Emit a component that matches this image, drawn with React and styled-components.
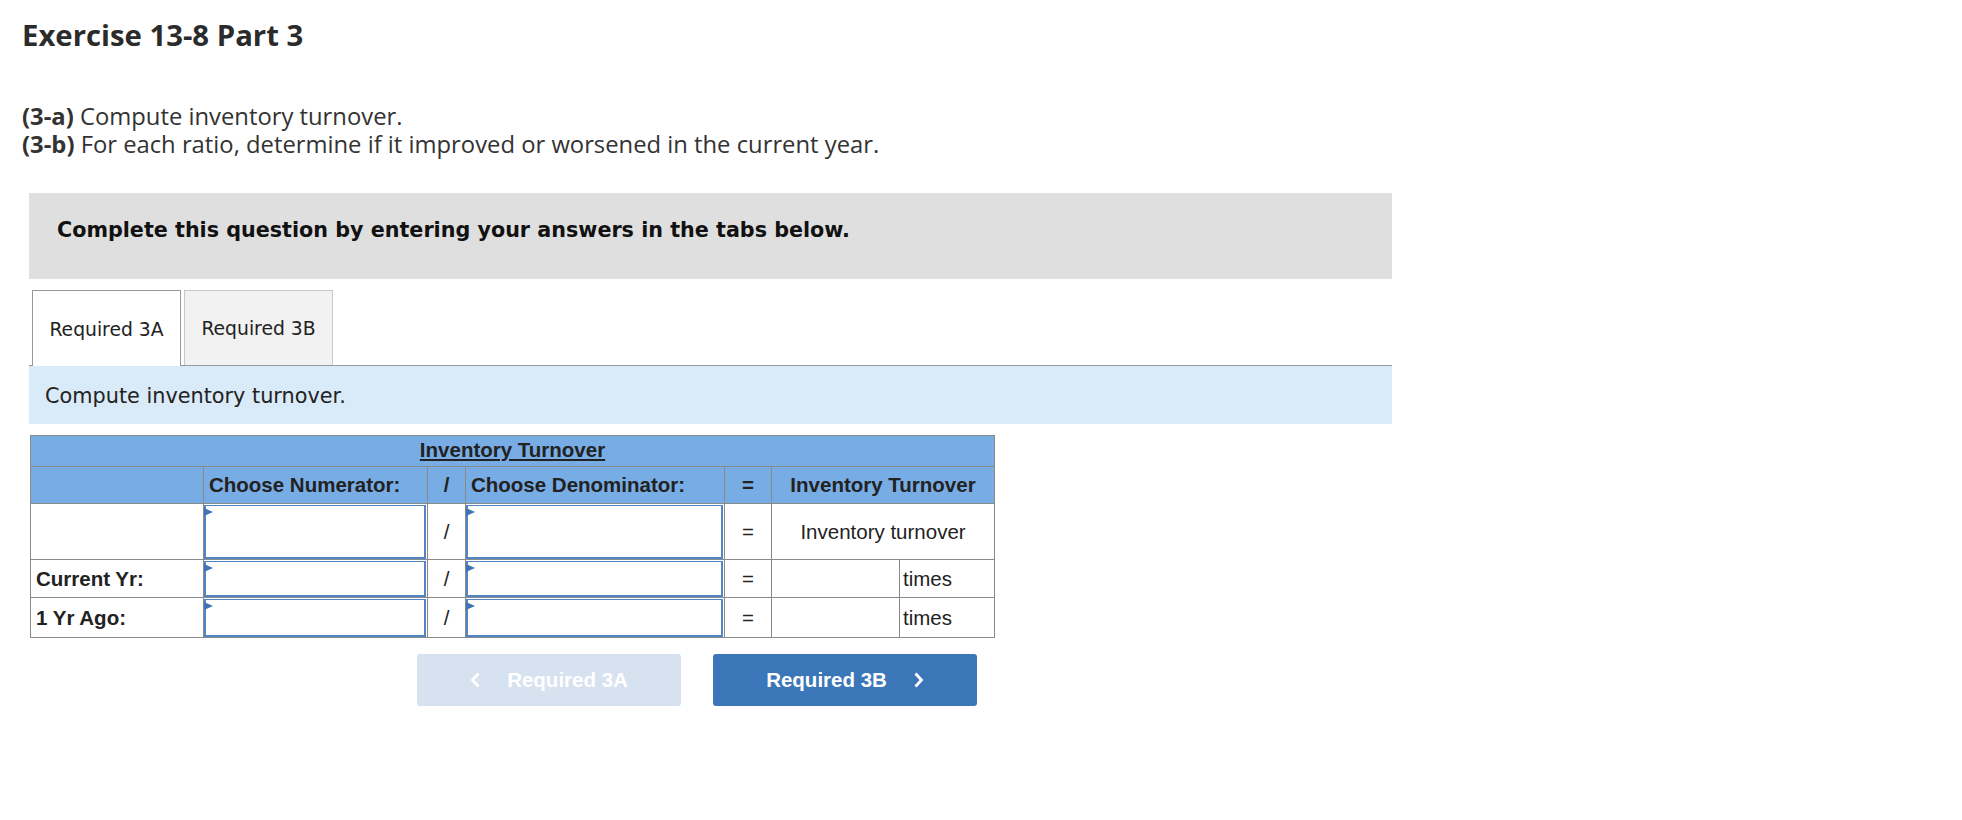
import React from 'react';
import styled, { createGlobalStyle } from 'styled-components';

const GlobalStyle = createGlobalStyle`
	body {
		margin: 0;
		background: #fff;
	}
`;

const Page = styled.div`
	padding: 17px 0 40px 22px;
`;

const Title = styled.h1`
	margin: 0;
	font-family: "Open Sans", sans-serif;
	font-weight: 700;
	font-size: 29.3px;
	line-height: 36px;
	color: #2b2b2b;
`;

const Intro = styled.div`
	margin-top: 50px;
	font-family: "Open Sans", sans-serif;
	font-size: 23.8px;
	line-height: 27.5px;
	color: #333;
	strong {
		font-weight: 700;
	}
`;

const Section = styled.div`
	margin-left: 7px;
	width: 1363px;
`;

const Notice = styled.div`
	box-sizing: border-box;
	margin-top: 35px;
	height: 86px;
	padding: 25px 28px 0;
	background: #dfdfdf;
	font-family: "DejaVu Sans", Verdana, sans-serif;
	font-weight: bold;
	font-size: 20.7px;
	color: #111;
`;

const TabBar = styled.div`
	box-sizing: border-box;
	margin-top: 11px;
	height: 76px;
	padding-left: 3px;
	display: flex;
	align-items: flex-start;
	gap: 3px;
	border-bottom: 1px solid #999;
`;

const Tab = styled.div`
	box-sizing: border-box;
	width: 149px;
	height: ${props => (props.active ? '76px' : '75px')};
	display: flex;
	align-items: center;
	justify-content: center;
	padding-top: ${props => (props.active ? '2px' : '1px')};
	border: 1px solid ${props => (props.active ? '#999' : '#c8c8c8')};
	border-bottom: none;
	background: ${props => (props.active ? '#fff' : '#f2f2f2')};
	font-family: "DejaVu Sans", Verdana, sans-serif;
	font-size: 18.75px;
	color: #222;
`;

const Instruction = styled.div`
	box-sizing: border-box;
	height: 58px;
	padding: 2px 0 0 16px;
	display: flex;
	align-items: center;
	background: #d9eaf8;
	font-family: "DejaVu Sans", Verdana, sans-serif;
	font-size: 20.8px;
	color: #222;
`;

const Grid = styled.table`
	margin-top: 11px;
	margin-left: 1px;
	width: 964px;
	table-layout: fixed;
	border-collapse: collapse;
	font-family: "Liberation Sans", Arial, sans-serif;
	font-size: 20.5px;
	color: #222;
`;

const Row = styled.tr`
	height: ${props => props.h}px;
`;

const Cell = styled.td`
	border: 1px solid #8a8a8a;
	padding: ${props => (props.input ? '0' : '0 5px')};
	background: ${props => (props.head ? '#78ace4' : '#fff')};
	font-weight: ${props => (props.bold ? 'bold' : 'normal')};
	text-align: ${props => props.align || 'left'};
	vertical-align: middle;
	white-space: nowrap;
	overflow: hidden;
`;

const TitleCell = styled.td`
	border: 1px solid #8a8a8a;
	background: #78ace4;
	text-align: center;
	font-weight: bold;
	text-decoration: underline;
	vertical-align: middle;
	padding: 0 0 2px;
`;

const Answer = styled.div`
	position: relative;
	box-sizing: border-box;
	height: ${props => props.h}px;
	margin: 0 1px 0 0;
	border: 2px solid #5185c6;
	border-top-width: 1px;
	background: #fff;
	&::before {
		content: '';
		position: absolute;
		left: -2px;
		top: 2px;
		border-style: solid;
		border-width: 4.5px 0 4.5px 9px;
		border-color: transparent transparent transparent #3c74b7;
	}
`;

const Buttons = styled.div`
	margin-top: 16px;
	padding-left: 388px;
	display: flex;
	gap: 32px;
`;

const NavButton = styled.button`
	width: 264px;
	height: 52px;
	border: none;
	border-radius: 3px;
	display: flex;
	align-items: center;
	justify-content: center;
	gap: 26px;
	background: ${props => (props.disabled ? '#d7e2f0' : '#3b76b9')};
	color: #fff;
	font-family: "Liberation Sans", Arial, sans-serif;
	font-weight: bold;
	font-size: 20.5px;
	padding: 0;
	cursor: ${props => (props.disabled ? 'default' : 'pointer')};
	svg {
		display: block;
	}
`;

const Chevron = ({ dir }) => (
	<svg width="11" height="16" viewBox="0 0 11 16">
		<polyline
			points={dir === 'left' ? '8.5,1.5 2.5,8 8.5,14.5' : '2.5,1.5 8.5,8 2.5,14.5'}
			fill="none"
			stroke="#fff"
			strokeWidth="2.8"
		/>
	</svg>
);

const rows = [
	{ label: 'Current Yr:', h: 38 },
	{ label: '1 Yr Ago:', h: 40 },
];

function App() {
	return (
		<Page>
			<GlobalStyle />
			<Title>Exercise 13-8 Part 3</Title>
			<Intro>
				<div><strong>(3-a)</strong> Compute inventory turnover.</div>
				<div><strong>(3-b)</strong> For each ratio, determine if it improved or worsened in the current year.</div>
			</Intro>
			<Section>
				<Notice>Complete this question by entering your answers in the tabs below.</Notice>
				<TabBar>
					<Tab active>Required 3A</Tab>
					<Tab>Required 3B</Tab>
				</TabBar>
				<Instruction>Compute inventory turnover.</Instruction>
				<Grid>
					<colgroup>
						<col style={{ width: 173 }} />
						<col style={{ width: 224 }} />
						<col style={{ width: 38 }} />
						<col style={{ width: 259 }} />
						<col style={{ width: 47 }} />
						<col style={{ width: 128 }} />
						<col style={{ width: 95 }} />
					</colgroup>
					<tbody>
						<Row h={31}>
							<TitleCell colSpan={7}>Inventory Turnover</TitleCell>
						</Row>
						<Row h={37}>
							<Cell head />
							<Cell head bold>Choose Numerator:</Cell>
							<Cell head bold align="center">/</Cell>
							<Cell head bold>Choose Denominator:</Cell>
							<Cell head bold align="center">=</Cell>
							<Cell head bold align="center" colSpan={2}>Inventory Turnover</Cell>
						</Row>
						<Row h={56}>
							<Cell />
							<Cell input><Answer h={54} /></Cell>
							<Cell align="center">/</Cell>
							<Cell input><Answer h={54} /></Cell>
							<Cell align="center">=</Cell>
							<Cell align="center" colSpan={2}>Inventory turnover</Cell>
						</Row>
						{rows.map(r => (
							<Row h={r.h} key={r.label}>
								<Cell bold>{r.label}</Cell>
								<Cell input><Answer h={r.h - 2} /></Cell>
								<Cell align="center">/</Cell>
								<Cell input><Answer h={r.h - 2} /></Cell>
								<Cell align="center">=</Cell>
								<Cell />
								<Cell style={{ paddingLeft: 3 }}>times</Cell>
							</Row>
						))}
					</tbody>
				</Grid>
				<Buttons>
					<NavButton disabled>
						<Chevron dir="left" />
						<span>Required 3A</span>
					</NavButton>
					<NavButton>
						<span>Required 3B</span>
						<Chevron dir="right" />
					</NavButton>
				</Buttons>
			</Section>
		</Page>
	);
}

export default App;
